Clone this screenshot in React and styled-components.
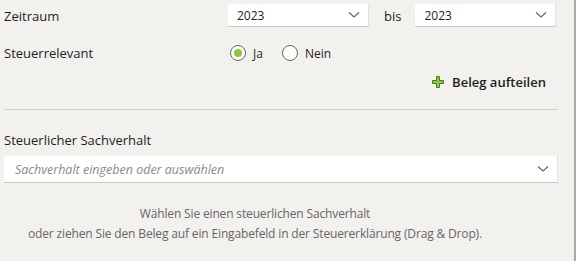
import React from 'react'
import styled, { createGlobalStyle } from 'styled-components'

const Global = createGlobalStyle`
  html, body { margin: 0; padding: 0; background: #f2f1ee; }
  body { font-family: "Open Sans", "Noto Sans", sans-serif; font-size: 13px; color: #1e1e1e; }
`

const Page = styled.div`
  width: 576px;
  height: 261px;
  box-sizing: border-box;
  border-right: 2px solid #a9a9a9;
  padding: 4px 16px 0 4px;
  overflow: hidden;
`

const Row = styled.div`
  display: flex;
  align-items: center;
  height: ${p => p.h || 24}px;
  margin-bottom: ${p => p.mb || 0}px;
`

const Label = styled.div`
  width: 224px;
  flex-shrink: 0;
`

const Select = styled.div`
  display: flex;
  align-items: center;
  justify-content: space-between;
  box-sizing: border-box;
  width: ${p => p.w}px;
  height: 23px;
  padding: 0 8px 0 9px;
  background: #fff;
  border-bottom: 1px solid #c9c9c9;
  border-right: 1px solid #e2e2e2;
  font-size: 12px;
`

const Bis = styled.span`
  margin: 0 14px 0 15px;
`

const Radios = styled.div`
  display: flex;
  align-items: center;
  gap: 19px;
  margin-left: 2px;
  font-size: 12px;
`

const Radio = styled.label`
  display: flex;
  align-items: center;
  gap: 7px;
`

const Circle = styled.span`
  width: 16px;
  height: 16px;
  box-sizing: border-box;
  border-radius: 50%;
  border: 1px solid #666;
  background: #fff;
  display: flex;
  align-items: center;
  justify-content: center;
  &::after {
    content: '';
    width: 8px;
    height: 8px;
    border-radius: 50%;
    background: ${p => (p.on ? '#8dc63f' : 'transparent')};
  }
`

const Action = styled.div`
  display: flex;
  justify-content: flex-end;
  align-items: center;
  gap: 8px;
  margin-top: 5px;
  padding-right: 12px;
  font-weight: 600;
  height: 24px;
`

const Divider = styled.hr`
  border: 0;
  border-top: 1px solid #cfcfcf;
  margin: 15px 0 0;
`

const SectionLabel = styled.div`
  margin-top: 18px;
  height: 24px;
  display: flex;
  align-items: center;
`

const Combo = styled(Select)`
  width: 100%;
  height: 27px;
  padding: 0 8px 0 11px;
  margin-top: 4px;
  font-size: 12.5px;
  font-style: italic;
  color: #8a8a8a;
`

const Hint = styled.div`
  width: 502px;
  margin-top: 21px;
  text-align: center;
  font-size: 12px;
  letter-spacing: -0.15px;
  line-height: 20px;
  color: #666;
`

const Chevron = () => (
  <svg width="12" height="8" viewBox="0 0 12 8">
    <path d="M1 1.5 L6 6 L11 1.5" fill="none" stroke="#666" strokeWidth="1.2" />
  </svg>
)

const Plus = () => (
  <svg width="12" height="12" viewBox="0 0 12 12">
    <path d="M4.5 0.5h3v4h4v3h-4v4h-3v-4h-4v-3h4z" fill="#8dc63f" stroke="#4d7a1e" strokeWidth="1" />
  </svg>
)

export default function App() {
  return (
    <>
      <Global />
      <Page>
        <Row h={23} mb={14}>
          <Label>Zeitraum</Label>
          <Select w={141}>2023<Chevron /></Select>
          <Bis>bis</Bis>
          <Select w={141}>2023<Chevron /></Select>
        </Row>
        <Row h={24}>
          <Label>Steuerrelevant</Label>
          <Radios>
            <Radio><Circle on />Ja</Radio>
            <Radio><Circle />Nein</Radio>
          </Radios>
        </Row>
        <Action><Plus />Beleg aufteilen</Action>
        <Divider />
        <SectionLabel>Steuerlicher Sachverhalt</SectionLabel>
        <Combo>Sachverhalt eingeben oder auswählen<Chevron /></Combo>
        <Hint>
          Wählen Sie einen steuerlichen Sachverhalt<br />
          oder ziehen Sie den Beleg auf ein Eingabefeld in der Steuererklärung (Drag &amp; Drop).
        </Hint>
      </Page>
    </>
  )
}
